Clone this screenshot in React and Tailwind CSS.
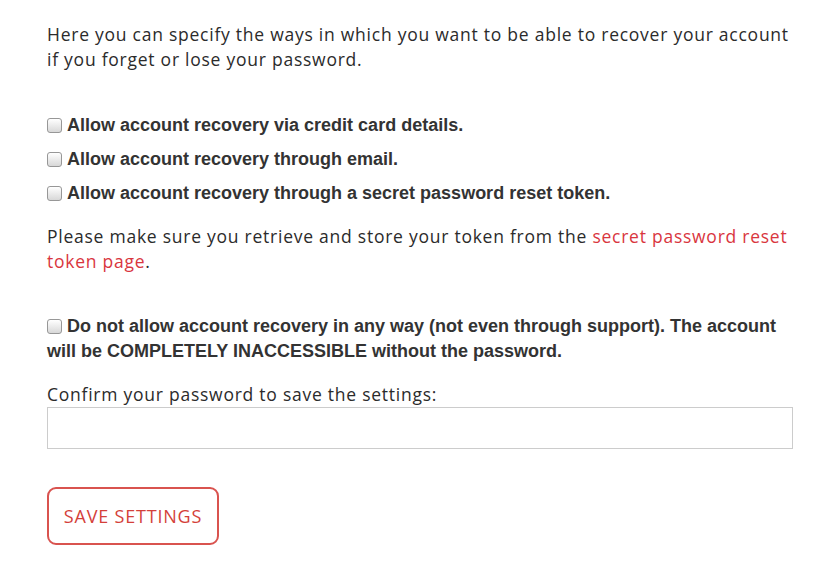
import { useState } from "react";

const Box = ({ checked, onChange }) => (
  <span
    onClick={onChange}
    className="inline-block w-[15px] h-[15px] rounded-[3px] border border-[#979797] bg-gradient-to-b from-white to-[#d8d8d8] align-[-2px] mr-[5px] cursor-pointer shrink-0"
  >
    {checked && <span className="block text-[11px] leading-[13px] text-center text-[#333]">✓</span>}
  </span>
);

export default function App() {
  const [opts, setOpts] = useState({ card: false, email: false, token: false, none: false });
  const toggle = (k) => setOpts((o) => ({ ...o, [k]: !o[k] }));

  const rows = [
    ["card", "Allow account recovery via credit card details."],
    ["email", "Allow account recovery through email."],
    ["token", "Allow account recovery through a secret password reset token."],
  ];

  return (
    <div className="bg-white min-h-[586px] w-[824px] text-[#2b2b2b] font-['Open_Sans',sans-serif] tracking-[0.75px]">
      <div className="w-[746px] ml-[47px] pt-[22px]">
        <p className="text-[17.5px] leading-[25px]">
          Here you can specify the ways in which you want to be able to recover your account if you forget or lose your password.
        </p>

        {/* Recovery options */}
        <div className="mt-[36px] font-['Liberation_Sans',Arial,sans-serif] font-bold text-[18px] tracking-normal text-[#333]">
          {rows.map(([k, label]) => (
            <div key={k} className="h-[34px] flex items-center">
              <Box checked={opts[k]} onChange={() => toggle(k)} />
              <span>{label}</span>
            </div>
          ))}
        </div>

        <p className="mt-[14px] text-[17.5px] leading-[25px]">
          Please make sure you retrieve and store your token from the{" "}
          <a href="#" className="text-[#d9363e]">secret password reset token page</a>.
        </p>

        <p className="mt-[40px] font-['Liberation_Sans',Arial,sans-serif] font-bold text-[18px] leading-[25px] tracking-normal text-[#333]">
          <Box checked={opts.none} onChange={() => toggle("none")} />
          Do not allow account recovery in any way (not even through support). The account will be COMPLETELY INACCESSIBLE without the password.
        </p>

        <label className="block mt-[18px] text-[17.5px] leading-[25px]">Confirm your password to save the settings:</label>
        <input
          type="password"
          className="block w-[746px] h-[42px] border border-[#cccccc] bg-white px-3 outline-none"
        />

        <button className="mt-[38px] w-[172px] h-[58px] rounded-[9px] border-2 border-[#d9534f] text-[#d43f3a] text-[18px] uppercase tracking-[0.8px]">
          Save Settings
        </button>
      </div>
    </div>
  );
}
